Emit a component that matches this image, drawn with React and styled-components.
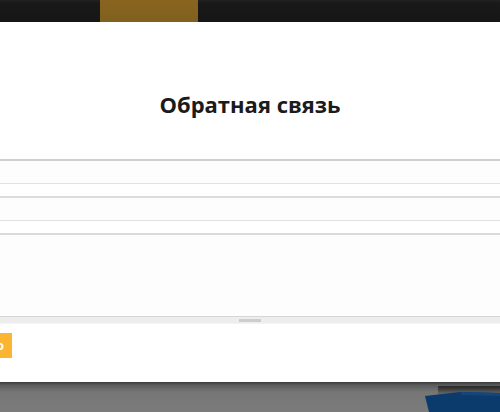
import React from 'react';
import styled, { createGlobalStyle } from 'styled-components';

const Global = createGlobalStyle`
  html, body { margin: 0; padding: 0; }
  body {
    background: #7a7a7a;
    font-family: "Open Sans", "DejaVu Sans", sans-serif;
    overflow: hidden;
  }
`;

const Page = styled.div`
  width: 500px;
  height: 412px;
  display: flex;
  flex-direction: column;
  background: #7a7a7a;
`;

const TopBar = styled.div`
  height: 22px;
  flex: none;
  display: flex;
  background: linear-gradient(#222 0, #191919 3px, #161616 100%);
  padding-left: 100px;
`;

const Tab = styled.div`
  width: 98px;
  background: linear-gradient(#8a6420, #80601e);
`;

const Modal = styled.div`
  height: 360px;
  flex: none;
  background: #fff;
  display: flex;
  flex-direction: column;
  position: relative;
  z-index: 1;
`;

const Title = styled.h2`
  margin: 0;
  padding-top: 69px;
  height: 68px;
  text-align: center;
  font-size: 22px;
  font-weight: 700;
  color: #1b1b1b;
  line-height: 26px;
`;

const Form = styled.form`
  display: flex;
  flex-direction: column;
  gap: 12px;
`;

const Field = styled.div`
  height: 22px;
  background: #fdfdfd;
  border-top: 2px solid ${p => (p.first ? '#cfcfcf' : '#dcdcdc')};
  border-bottom: 1px solid #e2e2e2;
`;

const Area = styled.div`
  display: flex;
  flex-direction: column;
`;

const AreaBox = styled.div`
  height: 81px;
  background: #fdfdfd;
  border-top: 2px solid #dadada;
`;

const Grip = styled.div`
  height: 6px;
  background: #ededed;
  border-top: 1px solid #d6d6d6;
  border-bottom: 1px solid #f4f4f4;
  display: flex;
  justify-content: center;
  align-items: center;
`;

const GripHandle = styled.div`
  width: 22px;
  height: 3px;
  background: #cdcdcd;
`;

const Footer = styled.div`
  margin-top: -3px;
  width: 12px;
  display: flex;
  justify-content: flex-end;
  overflow: hidden;
`;

const Send = styled.button`
  flex: none;
  height: 25px;
  border: none;
  padding: 0 8px 0 14px;
  background: #fbb532;
  color: #fff;
  font-family: inherit;
  font-size: 12px;
  font-weight: 700;
  white-space: nowrap;
`;

const Backdrop = styled.div`
  flex: 1;
  position: relative;
  background: linear-gradient(#3a3a3a 0, #5a5a5a 3px, #767676 10px, #7b7b7b 100%);
  overflow: hidden;
`;

const Photo = styled.svg`
  position: absolute;
  right: 0;
  top: 0;
`;

export default function App() {
  return (
    <Page>
      <Global />
      <TopBar>
        <Tab />
      </TopBar>
      <Modal>
        <Title>Обратная связь</Title>
        <Form>
          <Field first />
          <Field />
          <Area>
            <AreaBox />
            <Grip>
              <GripHandle />
            </Grip>
          </Area>
          <Footer>
            <Send type="button">Отправить письмо</Send>
          </Footer>
        </Form>
      </Modal>
      <Backdrop>
        <Photo width="80" height="30" viewBox="0 0 80 30">
          <defs>
            <linearGradient id="sh" x1="0" y1="0" x2="0" y2="1">
              <stop offset="0" stopColor="#222" stopOpacity="0.9" />
              <stop offset="1" stopColor="#222" stopOpacity="0" />
            </linearGradient>
          </defs>
          <rect x="18" y="4" width="62" height="10" fill="url(#sh)" />
          <polygon points="5,14 40,10 80,11 80,30 9,30" fill="#0b3a6c" />
          <polygon points="40,10 80,11 80,14 42,13" fill="#14467c" />
        </Photo>
      </Backdrop>
    </Page>
  );
}
